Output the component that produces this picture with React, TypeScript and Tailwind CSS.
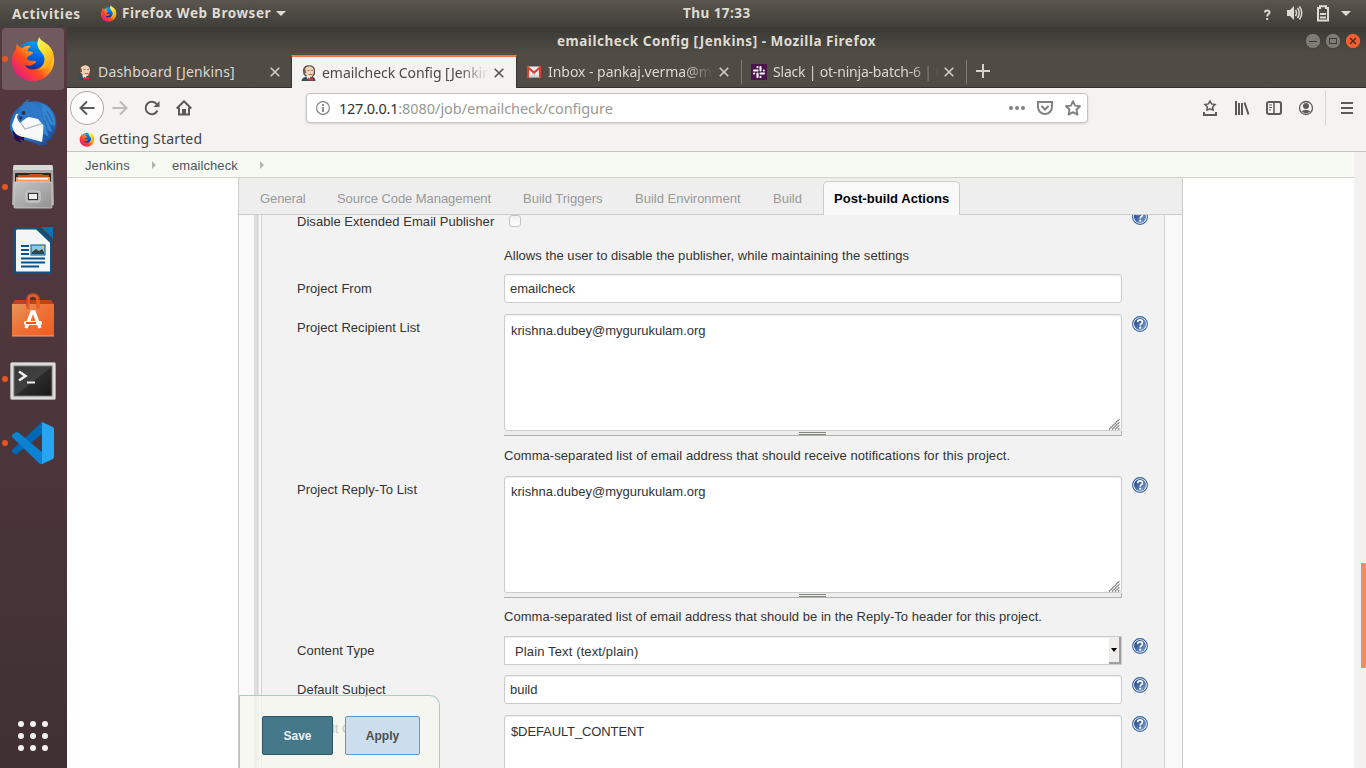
import React from "react";

const UI = "font-['Noto_Sans',sans-serif]";

function FirefoxLogo({ size }: { size: number }) {
  return (
    <svg width={size} height={size} viewBox="0 0 48 48" className="shrink-0">
      <defs>
        <linearGradient id="fxBody" x1="0.95" y1="0.15" x2="0.1" y2="0.9">
          <stop offset="0" stopColor="#fff44f" />
          <stop offset="0.35" stopColor="#ffa01e" />
          <stop offset="0.6" stopColor="#ff4a1f" />
          <stop offset="1" stopColor="#e5148c" />
        </linearGradient>
        <linearGradient id="fxGlobe" x1="0.7" y1="0" x2="0.4" y2="1">
          <stop offset="0" stopColor="#0aa5f5" />
          <stop offset="0.5" stopColor="#0060df" />
          <stop offset="1" stopColor="#20116e" />
        </linearGradient>
        <linearGradient id="fxFlame" x1="0.3" y1="0" x2="0.7" y2="1">
          <stop offset="0" stopColor="#fff85a" />
          <stop offset="0.5" stopColor="#ffd62a" />
          <stop offset="1" stopColor="#ff9410" />
        </linearGradient>
      </defs>
      <circle cx="24" cy="23" r="17.5" fill="url(#fxGlobe)" />
      <path
        d="M7.5 8C6 11 6.500 13.500 6.500 13.500C3 17 2 22 2 26C2 38 12 47 24 47C37 47 46 37 46 25C46 18 43 12 38 8C39 14 40 18 38 24C36 31 30 35 24 35C20 35 17 33 15.500 30C19 32 23 31 25 29C27 28 28 27 26.500 26C22 26 18 26 18 23.500C18 21 22 20 24 18C24 16.500 22 16 18 16C19 13 20 12 22 10.500C18 9.500 15 10.500 13 12.500C10 12 8 10 7.500 8Z"
        fill="url(#fxBody)"
      />
      <path
        d="M31 1C28 5 28 9 30 13C32 17 36 19 36 24C36 29 33 33 30 35C36 35 43 31 45 25C47 17 42 11 38 8C34 5 31 4 31 1Z"
        fill="url(#fxFlame)"
      />
    </svg>
  );
}

function Thunderbird() {
  return (
    <svg width="50" height="50" viewBox="0 0 50 50">
      <defs>
        <linearGradient id="tb" x1="0" y1="0" x2="1" y2="1">
          <stop offset="0" stopColor="#1d5fb4" />
          <stop offset="0.5" stopColor="#2b7fd2" />
          <stop offset="1" stopColor="#173a86" />
        </linearGradient>
      </defs>
      <path d="M2 30C1 18 8 9 20 4C31 1 43 7 47 18C50 26 48 34 43 40L45 41L38 43L39 47L32 47L33 49L27 45L5 38Z" fill="url(#tb)" />
      <path d="M4 33L7 42L13 45L12 41L16 43V36Z" fill="#271152" />
      <path d="M8 16L17 15L37 20L34 44L16 39C9 39 5 34 4 27Z" fill="#f8f8f9" />
      <path d="M9 19L17 31L36 25" fill="none" stroke="#aeb4bc" strokeWidth="1.300" />
      <path d="M11 15C13 6 18 2 22 1L19 4C28 3 34 9 36 18L36 28L30 21L21 19C17 20 15 23 12 25C9 21 8 18 11 15Z" fill="#2f78c8" />
      <path d="M34 6C43 10 48 18 47 28L42 26L44 34L38 31L41 39L35 35L36 21C35 15 34 11 34 6Z" fill="#3387d0" />
      <path d="M39 13L45 24M37 17L43 29M36 22L40 33" stroke="#236db8" strokeWidth="1.400" />
      <circle cx="15.500" cy="15" r="2" fill="#27334a" />
      <path d="M11 18L15 19L12 23Z" fill="#1c3568" />
    </svg>
  );
}

function FilesIcon() {
  return (
    <svg width="44" height="46" viewBox="0 0 44 46">
      <defs>
        <linearGradient id="cab" x1="0" y1="0" x2="1" y2="1">
          <stop offset="0" stopColor="#c4c4c4" />
          <stop offset="1" stopColor="#929292" />
        </linearGradient>
      </defs>
      <path d="M2 2Q2 1 4 1H40Q42 1 42 2L43 41H1Z" fill="#a8a8a8" />
      <path d="M3 1H41L42 6H2Z" fill="#d9d9d9" />
      <rect x="4" y="9" width="36" height="10" rx="1" fill="#2b2421" />
      <path d="M7 11H17L19 10H31L33 11H38V20H6Z" fill="#c9500f" />
      <path d="M5 13H39V20H5Z" fill="#f3a04e" />
      <rect x="7" y="14" width="30" height="1.500" fill="#fff" />
      <rect x="3" y="18" width="38" height="26" rx="1" fill="url(#cab)" stroke="#d2d2d2" strokeWidth="0.800" />
      <rect x="15" y="27" width="14" height="11" rx="2" fill="#adadad" stroke="#d5d5d5" />
      <rect x="17.500" y="29.500" width="9" height="6" fill="#eee" stroke="#333" />
    </svg>
  );
}

function WriterIcon() {
  return (
    <svg width="42" height="50" viewBox="0 0 42 50">
      <path d="M4 1H27L40 14V45Q40 48 37 48H4Q1 48 1 45V4Q1 1 4 1Z" fill="#0a5388" />
      <path d="M5 3.500H24L38 17V45.500H4V4.500Z" fill="#f3f5f6" />
      <path d="M29 1H41V13Z" fill="#0b73b4" />
      <path d="M24 3.500L38 17V23Z" fill="#fff" />
      <path d="M9 20H17M9 24H17M9 28H17M9 32.500H33M9 36.500H33M9 40.500H27" stroke="#09528a" strokeWidth="2" />
      <rect x="19" y="19" width="14" height="10" fill="#84cbed" stroke="#13507d" />
      <path d="M20 28V26L24 23L27 25L30 23L32 26V28Z" fill="#34454a" />
      <circle cx="31" cy="21" r="1.300" fill="#f2c53d" />
    </svg>
  );
}

function SoftwareIcon() {
  return (
    <svg width="44" height="46" viewBox="0 0 44 46">
      <defs>
        <linearGradient id="bag" x1="0" y1="0" x2="1" y2="1">
          <stop offset="0" stopColor="#e79559" />
          <stop offset="0.500" stopColor="#ee7036" />
          <stop offset="1" stopColor="#f05c20" />
        </linearGradient>
      </defs>
      <path d="M1 12L4 8H40L43 12V15H1Z" fill="#bb441b" />
      <rect x="1" y="12" width="42" height="32" fill="url(#bag)" />
      <path d="M1 44H43" stroke="#f8a374" strokeWidth="1" />
      <path d="M17 17V8Q17 3 22 3Q27 3 27 8V17" fill="none" stroke="#e5602f" strokeWidth="3.500" />
      <path d="M16 14V8Q16 2 22 2Q28 2 28 8" fill="none" stroke="#9d3b1b" strokeWidth="0.800" />
      <path d="M15 36L21 20H23L29 36" fill="none" stroke="#fff" strokeWidth="3.500" />
      <rect x="13" y="29" width="18" height="4" rx="1.500" fill="#fff" />
      <rect x="15" y="30" width="10" height="2" fill="#e95420" />
    </svg>
  );
}

function TerminalIcon() {
  return (
    <svg width="46" height="38" viewBox="0 0 46 38" className="mt-[3px]">
      <defs>
        <linearGradient id="term" x1="0" y1="0" x2="1" y2="1">
          <stop offset="0" stopColor="#383838" />
          <stop offset="0.500" stopColor="#404040" />
          <stop offset="0.520" stopColor="#2b2b2b" />
          <stop offset="1" stopColor="#191919" />
        </linearGradient>
      </defs>
      <rect x="0.500" y="0.500" width="45" height="37" rx="1.500" fill="#dcdcdc" stroke="#a4a4a4" />
      <rect x="4" y="4" width="38" height="30" fill="url(#term)" stroke="#777" />
      <path d="M9 9.500L15.500 14L9 18.500" fill="none" stroke="#efefef" strokeWidth="2.600" />
      <path d="M17 20.500H25" stroke="#efefef" strokeWidth="2" />
    </svg>
  );
}

function CodeIcon() {
  return (
    <svg width="44" height="44" viewBox="0 0 44 44">
      <path d="M1 29L31 1V13L6 33Q4 34 1 31Z" fill="#0068b5" />
      <path d="M1 14L5 11Q6 11 8 12L32 32V43H29L1 16Z" fill="#0b83d2" />
      <path d="M31 1L42 6Q43 7 43 9V35Q43 37 42 38L31 43Z" fill="#27a5f0" />
    </svg>
  );
}

function JenkinsIcon() {
  return (
    <svg width="16" height="16" viewBox="0 0 16 16" className="shrink-0">
      <path d="M0.500 16Q0.500 13 4 12L12 12Q14.500 13 14.500 16Z" fill="#33505c" />
      <path d="M2 4.500Q3 0.200 8 0.200Q13.500 0.200 14 5V9L11.500 12.500H6L2.500 9.500Z" fill="#54453c" />
      <path d="M3.500 4Q5 1 8.500 1.200Q13 1.500 13 6.500Q13 9.500 10.800 12H7L3.500 8.500Z" fill="#ecd0b4" />
      <path d="M2.500 4L4.500 4.500L5 8L3 8.500Z" fill="#6b584c" />
      <path d="M6.500 5.500H8.500M10.300 5.500H12M8 9.500H11.500" stroke="#8d6b58" strokeWidth="0.900" />
      <path d="M5 11L7 14.500H9.500L9 11.500Z" fill="#f4efe9" />
      <path d="M7 12.800L9.500 13.700L12 12.800V16L9.500 15L7 16Z" fill="#d3343c" />
    </svg>
  );
}

function GmailIcon() {
  return (
    <svg width="16" height="16" viewBox="0 0 16 16" className="shrink-0">
      <rect x="1" y="2.500" width="14" height="11" rx="1" fill="#ececec" />
      <path d="M3 13L8 8L13 13Z" fill="#d5d5d5" />
      <path d="M2 13.500V3.500L8 8.500L14 3.500V13.500" fill="none" stroke="#d8402f" strokeWidth="2.200" />
    </svg>
  );
}

function SlackIcon() {
  return (
    <svg width="16" height="16" viewBox="0 0 16 16" className="shrink-0">
      <rect width="16" height="16" fill="#4a154b" />
      <g stroke="#fff" strokeWidth="2.100" strokeLinecap="round">
        <path d="M6.500 6.500H3M9.500 3V6.500M9.500 9.500H13M6.500 9.500V13" />
        <path d="M6.500 3.100V3.200M12.900 6.500H12.800M9.500 12.900V12.800M3.100 9.500H3.200" />
      </g>
    </svg>
  );
}

function Close({ color }: { color: string }) {
  return (
    <svg width="10" height="10" viewBox="0 0 10 10" className="shrink-0">
      <path d="M0.700 0.700L9.300 9.300M9.300 0.700L0.700 9.300" stroke={color} strokeWidth="1.600" />
    </svg>
  );
}

type TabProps = { icon: React.ReactNode; title: string; active?: boolean; text: string };

function BrowserTab({ icon, title, active, text }: TabProps) {
  return (
    <div
      className={
        active
          ? "flex h-[33px] w-[226px] items-center border-x border-t-2 border-x-[#35342f] border-t-[#f0764a] bg-[#f4f3f2] pr-[12px] pl-[9px]"
          : "flex h-[32px] w-[225px] items-center border-t border-transparent pr-[12px] pl-[10px]"
      }
    >
      {icon}
      <div
        className={`ml-[5px] h-[22px] flex-1 overflow-hidden text-[14px] leading-[21px] whitespace-nowrap ${active ? "text-[#4a4946]" : "text-[#dbd8d0]"} ${
          title.startsWith("Dash") ? "" : "[mask-image:linear-gradient(to_right,black_82%,transparent_100%)]"
        }`}
      >
        <span className={text}>{title}</span>
      </div>
      <div className="ml-[5px]">
        <Close color={active ? "#55534f" : "#d0cdc5"} />
      </div>
    </div>
  );
}

function Help({ className = "mt-[2px]" }: { className?: string }) {
  return (
    <svg width="16" height="16" viewBox="0 0 16 16" className={`ml-[10px] shrink-0 ${className}`}>
      <defs>
        <linearGradient id="helpBlue" x1="0" y1="0" x2="1" y2="1">
          <stop offset="0.200" stopColor="#2a4f92" />
          <stop offset="1" stopColor="#7fa4d6" />
        </linearGradient>
      </defs>
      <circle cx="8" cy="8" r="7.400" fill="#fff" stroke="#34619f" strokeWidth="1.100" />
      <circle cx="8" cy="8" r="6" fill="url(#helpBlue)" />
      <path d="M5.600 6.200Q5.600 3.900 8.100 3.900Q10.400 3.900 10.400 5.900Q10.400 7.200 9.200 7.800Q8.200 8.300 8.200 9.400" fill="none" stroke="#fff" strokeWidth="1.700" />
      <circle cx="8.200" cy="11.700" r="1.100" fill="#fff" />
    </svg>
  );
}

type RowProps = { label?: string; labelClass?: string; height: string; help?: boolean; helpClass?: string; children: React.ReactNode };

function Row({ label, labelClass = "pt-[7px]", height, help, helpClass, children }: RowProps) {
  return (
    <div className={`flex shrink-0 ${height}`}>
      <div className={`w-[207px] shrink-0 leading-[15px] tracking-[0.040px] ${labelClass}`}>{label}</div>
      <div className="w-[618px] shrink-0">{children}</div>
      {help && <Help className={helpClass} />}
    </div>
  );
}

type AreaProps = { value: string; valueClass?: string; hint?: string; hintClass?: string };

function Area({ value, valueClass = "pt-[8px]", hint, hintClass = "" }: AreaProps) {
  return (
    <div>
      <div className={`relative h-[117px] rounded-[3px] border border-[#ccc] bg-white px-[6px] leading-[15px] shadow-[inset_0_1px_1px_rgba(0,0,0,0.075)] ${valueClass}`}>
        {value}
        <svg width="11" height="11" viewBox="0 0 11 11" className="absolute right-[1px] bottom-[0px]">
          <path d="M0 10.500L10.500 0M3 10.500L10.500 3M6 10.500L10.500 6M9 10.500L10.500 9" stroke="#666" strokeWidth="1.200" strokeDasharray="1.600 0.400" />
        </svg>
      </div>
      <div className="flex h-[5px] justify-center border-r border-b border-[#b0b0b0] bg-[#eee] pt-px">
        <div className="h-[3px] w-[27px] border-y border-[#83887f]" />
      </div>
      {hint && <div className={`leading-[15px] whitespace-nowrap ${hintClass}`}>{hint}</div>}
    </div>
  );
}

function Dot() {
  return <div className="h-[6px] w-[6px] rounded-full bg-[#e95420]" />;
}

function DockItem({ running, active, children }: { running?: boolean; active?: boolean; children: React.ReactNode }) {
  return (
    <div className={`flex h-[62px] w-[62px] items-center rounded-[4px] ${active ? "bg-[#705a5d]" : ""}`}>
      <div className="w-[6px]">{running && <Dot />}</div>
      <div className="flex w-[50px] justify-center">{children}</div>
    </div>
  );
}

function Chevron() {
  return <div className="h-0 w-0 border-y-[4px] border-l-[4px] border-y-transparent border-l-[#b3b5b0]" />;
}

export default function App() {
  const S = { fill: "none", stroke: "#5b5a58", strokeWidth: 2 };
  return (
    <div className={`flex h-[768px] w-[1366px] flex-col overflow-hidden bg-white ${UI}`}>
      <div className="flex h-[27px] shrink-0 items-center bg-gradient-to-b from-[#5a564d] to-[#403f3a] text-[14px] font-bold text-[#dfdbd2]">
        <div className="w-[88px] shrink-0 pl-[12px]"><span className="text-[13.500px] tracking-[0.600px]">Activities</span></div>
        <div className="flex w-[212px] shrink-0 items-center pl-[12px] whitespace-nowrap">
          <FirefoxLogo size={17} />
          <span className="ml-[5px] text-[13.500px] tracking-[0.580px]">Firefox Web Browser</span>
          <div className="ml-[5px] h-0 w-0 shrink-0 border-x-[5px] border-t-[5px] border-x-transparent border-t-[#dfdbd2]" />
        </div>
        <div className="flex-1 pl-[383px] text-[13.500px] tracking-[0.450px] whitespace-nowrap">Thu 17:33</div>
        <div className="flex w-[104px] shrink-0 items-center text-[13px]">
          <svg width="10" height="14" viewBox="0 0 10 14" className="mt-[3px]">
            <path d="M2.800 4.500Q3 2.500 5.200 2.500Q7.500 2.500 7.500 4.500Q7.500 5.700 6 6.500Q5.200 7 5.200 8.500M5.200 10V12" fill="none" stroke="#dfdbd2" strokeWidth="2" />
          </svg>
          <svg width="16" height="16" viewBox="0 0 16 16" className="-mt-px ml-[15px]" fill="none" stroke="#dfdbd2" strokeWidth="1.500">
            <path d="M0 5H3L7 1V15L3 11H0Z" fill="#dfdbd2" stroke="none" />
            <path d="M8.500 5Q10.500 8 8.500 11M10.500 3Q14 8 10.500 13M12.500 1.500Q17 8 12.500 14.500" />
          </svg>
          <svg width="12" height="17" viewBox="0 0 12 17" className="-mt-px ml-[14px]" fill="none" stroke="#dfdbd2" strokeWidth="2">
            <path d="M1 3H3V1.200H9V3H11V15.500H1ZM3 9H9M3 12.500H9" />
          </svg>
          <div className="ml-[12px] h-0 w-0 border-x-[5px] border-t-[5px] border-x-transparent border-t-[#dfdbd2]" />
        </div>
      </div>

      <div className="flex h-[741px]">
        <div className="flex w-[67px] shrink-0 flex-col gap-[2px] bg-gradient-to-b from-[#54393f] via-[#4c363c] to-[#3f3033] pt-[1px] pl-[2px]">
          <DockItem running active><FirefoxLogo size={46} /></DockItem>
          <DockItem><Thunderbird /></DockItem>
          <DockItem running><FilesIcon /></DockItem>
          <DockItem><WriterIcon /></DockItem>
          <DockItem><SoftwareIcon /></DockItem>
          <DockItem running><TerminalIcon /></DockItem>
          <DockItem running><CodeIcon /></DockItem>
          <div className="mt-auto mb-[17px] ml-[16px] grid w-[30px] grid-cols-3 gap-[6px]">
            {Array.from({ length: 9 }, (_, i) => (
              <div key={i} className="h-[6px] w-[6px] rounded-full bg-[#f3f1f0]" />
            ))}
          </div>
        </div>

        <div className="flex w-[1299px] flex-col">
          <div className="flex h-[61px] shrink-0 flex-col border-b border-[#31302c] bg-gradient-to-b from-[#3a3934] via-[#504c45] via-45% to-[#504c45]">
            <div className="flex h-[28px] shrink-0 items-center">
              <div className="flex-1 pl-[490px] text-[13.500px] font-bold whitespace-nowrap text-[#dfdbd2]"><span className="tracking-[0.520px]">emailcheck Config [Jenkins] - Mozilla Firefox</span></div>
              <div className="mr-[5px] flex gap-[4px]">
                {["min", "max", "close"].map((k) => (
                  <svg key={k} width="16" height="16" viewBox="0 0 16 16">
                    <circle cx="8" cy="8" r="7.600" fill={k === "close" ? "#ee5f31" : "#7d7b74"} stroke="#35342f" strokeWidth="0.600" />
                    {k === "min" && <path d="M4 8.500H12" stroke="#3b3a35" />}
                    {k === "max" && <rect x="4.500" y="5.500" width="7" height="5" fill="none" stroke="#3b3a35" />}
                    {k === "close" && <path d="M5 5L11 11M11 5L5 11" stroke="#4a2416" strokeWidth="1.300" />}
                  </svg>
                ))}
              </div>
            </div>
            <div className="flex h-[33px] shrink-0">
              <div className="w-[224px] pr-px"><div className="-mr-px w-[224px] overflow-hidden"><div className="-ml-px pl-px"><BrowserTab icon={<JenkinsIcon />} title="Dashboard [Jenkins]" text="tracking-[0.180px]" /></div></div></div>
              <BrowserTab active icon={<JenkinsIcon />} title="emailcheck Config [Jenkins]" text="tracking-[-0.040px]" />
              <div className="-ml-[1px]"><BrowserTab icon={<GmailIcon />} title="Inbox - pankaj.verma@mygurukulam" text="pl-px tracking-[-0.040px]" /></div>
              <div className="mt-[5px] -mr-px h-[24px] w-px bg-[#817d75]" />
              <BrowserTab icon={<SlackIcon />} title="Slack | ot-ninja-batch-6 | Opstree" text="pl-px tracking-[-0.200px]" />
              <div className="mt-[5px] h-[24px] w-px bg-[#817d75]" />
              <svg width="14" height="14" viewBox="0 0 14 14" className="mt-[9px] ml-[9px]">
                <path d="M7 0V14M0 7H14" stroke="#d6d3cb" strokeWidth="2" />
              </svg>
            </div>
          </div>

          <div className="flex h-[64px] shrink-0 flex-col border-b border-[#c5c4c2] bg-[#f4f3f2]">
            <div className="flex h-[40px] shrink-0 items-center">
              <div className="ml-[3px] flex h-[34px] w-[34px] items-center justify-center rounded-full border border-[#acabaa] bg-[#fcfcfc]">
                <svg width="16" height="16" viewBox="0 0 16 16" {...S}><path d="M15.500 8H1.500M8 1.500L1.500 8L8 14.500" /></svg>
              </div>
              <svg width="16" height="16" viewBox="0 0 16 16" {...S} stroke="#bbbab8" className="ml-[8px]"><path d="M0.500 8H14.500M8 1.500L14.500 8L8 14.500" /></svg>
              <svg width="16" height="16" viewBox="0 0 16 16" {...S} className="ml-[16px]"><path d="M13 4.500A6.200 6.200 0 1 0 13.500 10.500" /><path d="M15.500 1V7H9.500Z" fill="#5b5a58" stroke="none" /></svg>
              <svg width="16" height="16" viewBox="0 0 16 16" {...S} className="ml-[16px]"><path d="M0.700 8.500L8 1.300L15.300 8.500M3 7.500V14.500H13V7.500" /><rect x="6" y="9" width="4" height="6" fill="#5b5a58" stroke="none" /></svg>
              <div className="ml-[114px] flex h-[30px] w-[782px] items-center rounded-[4px] border border-[#c5c4c2] bg-white pr-[6px] pl-[9px] shadow-sm">
                <svg width="14" height="14" viewBox="0 0 14 14" fill="none" stroke="#858482">
                  <circle cx="7" cy="7" r="6.400" strokeWidth="1.200" /><path d="M7 6V11M7 3V5" strokeWidth="1.800" />
                </svg>
                <div className="ml-[9px] flex-1 pt-[2px] text-[14.500px] whitespace-nowrap text-[#9a9996]">
                  <span className="tracking-[-0.240px] text-[#33322f]">127.0.0.1</span><span className="tracking-[-0.050px]">:8080/job/emailcheck/configure</span>
                </div>
                <svg width="16" height="4" viewBox="0 0 16 4" fill="#828180"><circle cx="2" cy="2" r="2" /><circle cx="8" cy="2" r="2" /><circle cx="14" cy="2" r="2" /></svg>
                <svg width="16" height="16" viewBox="0 0 16 16" fill="none" stroke="#828180" strokeWidth="2" className="ml-[12px]"><path d="M1 2H15V7A7 7 0 0 1 1 7ZM4.500 6L8 9.500L11.500 6" /></svg>
                <svg width="16" height="16" viewBox="0 0 16 16" fill="none" stroke="#828180" strokeWidth="1.900" strokeLinejoin="round" className="ml-[12px]"><path d="M8 1.200L10.100 5.600L15 6.200L11.500 9.500L12.400 14.600L8 12.100L3.600 14.600L4.500 9.500L1 6.200L5.900 5.600Z" /></svg>
              </div>
              <div className="ml-auto flex items-center">
                <svg width="16" height="16" viewBox="0 0 16 16" {...S}><path d="M8 1L9.600 3.900L13 4.500L10.600 6.900L11.100 10.100L8 8.700L4.900 10.100L5.400 6.900L3 4.500L6.400 3.900Z" strokeWidth="1.500" /><path d="M2 12V15H14V12" /></svg>
                <svg width="16" height="16" viewBox="0 0 16 16" {...S} className="ml-[16px]"><path d="M2 1V15M5 3V15M8 3V15M10.500 2.500L14.500 14.500" /></svg>
                <svg width="16" height="16" viewBox="0 0 16 16" {...S} className="ml-[16px]"><rect x="1" y="2" width="14" height="12" rx="2" /><path d="M8 2V14" strokeWidth="1.500" /><path d="M3 5H6M3 7.500H6M3 10H5" strokeWidth="1" /></svg>
                <svg width="16" height="16" viewBox="0 0 16 16" {...S} className="ml-[16px]"><circle cx="8" cy="8" r="6.500" strokeWidth="1.300" /><circle cx="8" cy="6" r="3" fill="#5b5a58" stroke="none" /><path d="M3.500 11.300Q8 8 12.500 11.300Q8 15.500 3.500 11.300Z" fill="#5b5a58" stroke="none" /></svg>
                <div className="ml-[11px] h-[34px] w-px bg-[#d5d4d2]" />
                <svg width="12" height="14" viewBox="0 0 12 14" {...S} className="mr-[13px] ml-[15px]"><path d="M0 2H12M0 7H12M0 12H12" /></svg>
              </div>
            </div>
            <div className="flex h-[22px] items-center pl-[12px] text-[14px] text-[#42413e]">
              <FirefoxLogo size={16} /><span className="-mt-[2px] ml-[4px] tracking-[0.170px]">Getting Started</span>
            </div>
          </div>

          <div className="flex h-[616px] font-['Liberation_Sans',Arial,sans-serif] text-[13px] text-[#333]">
            <div className="flex w-[1287px] flex-col bg-white">
              <div className="flex h-[26px] shrink-0 items-center border-b border-[#d3d3d1] bg-[#f6faf2] pl-[18px] text-[#4d545d]">
                <span className="w-[67px] pt-[2px] tracking-[0.100px]">Jenkins</span><Chevron />
                <span className="ml-[16px] w-[88px] pt-[2px] tracking-[0.080px]">emailcheck</span><Chevron />
              </div>
              <div className="relative ml-[171px] flex h-[590px] w-[945px] flex-col border-x border-[#ccc] bg-[#f9f9f9]">
                <div className="flex h-[37px] shrink-0 border-b border-[#ccc] bg-[#eee] pl-[21px] leading-[42px] whitespace-nowrap text-[#999]">
                  <div className="w-[77px] tracking-[-0.100px]">General</div>
                  <div className="w-[186px] tracking-[-0.060px]">Source Code Management</div>
                  <div className="w-[112px]">Build Triggers</div>
                  <div className="w-[138px]">Build Environment</div>
                  <div className="w-[50px]">Build</div>
                  <div className="mt-[3px] h-[34px] w-[137px] rounded-t-[5px] border border-b-0 border-[#ccc] bg-[#f9f9f9] pl-[10px] leading-[34px] font-bold tracking-[0.050px] text-black">Post-build Actions</div>
                </div>
                <div className="ml-[15px] flex h-[553px] w-[911px] overflow-hidden border-r border-[#d3d3d3]">
                  <div className="mr-[2px] w-[5px] shrink-0 bg-[#ddd]" />
                  <div className="flex w-[903px] shrink-0 flex-col border-l border-[#d3d3d3] bg-[#f2f2f2] pl-[35px]">
                    <div className="flex h-[30px] shrink-0">
                      <div className="w-[212px] leading-[14px] tracking-[0.045px] whitespace-nowrap">Disable Extended Email Publisher</div>
                      <div className="h-[12px] w-[12px] rounded-[3px] border border-[#c4c4c4] bg-gradient-to-b from-[#f0f0f0] to-white" />
                      <div className="ml-[601px]"><Help className="-mt-[6px]" /></div>
                    </div>
                    <Row height="h-[29px]"><div className="pt-[3px] leading-[15px] tracking-[0.045px]">Allows the user to disable the publisher, while maintaining the settings</div></Row>
                    <Row label="Project From" height="h-[40px]">
                      <div className="h-[29px] rounded-[3px] border border-[#ccc] bg-white px-[5px] leading-[27px] shadow-[inset_0_1px_1px_rgba(0,0,0,0.075)]">emailcheck</div>
                    </Row>
                    <Row label="Project Recipient List" labelClass="pt-[6px]" height="h-[162px]" help><Area value="krishna.dubey@mygurukulam.org" hint="Comma-separated list of email address that should receive notifications for this project." hintClass="pt-[12px] tracking-[0.068px]" /></Row>
                    <Row label="Project Reply-To List" labelClass="pt-[6px]" height="h-[160px]" help helpClass="mt-[1px]"><Area value="krishna.dubey@mygurukulam.org" valueClass="pt-[7px]" hint="Comma-separated list of email address that should be in the Reply-To header for this project." hintClass="pt-[11px] tracking-[0.035px]" /></Row>
                    <Row label="Content Type" height="h-[39px]" help>
                      <div className="flex h-[29px] border border-[#ccc] bg-white pl-[10px] leading-[29px] shadow-[inset_0_1px_1px_rgba(0,0,0,0.075)]">
                        <div className="flex-1 tracking-[0.130px]">Plain Text (text/plain)</div>
                        <div className="flex h-[27px] w-[12px] items-center justify-center border-r-2 border-b-2 border-[#a0a0a0] bg-[#efeeec]">
                          <div className="h-0 w-0 border-x-[3px] border-t-[4px] border-x-transparent border-t-black" />
                        </div>
                      </div>
                    </Row>
                    <Row label="Default Subject" height="h-[40px]" help>
                      <div className="h-[29px] rounded-[3px] border border-[#ccc] bg-white px-[5px] leading-[27px] shadow-[inset_0_1px_1px_rgba(0,0,0,0.075)]">build</div>
                    </Row>
                    <Row label="Default Content" labelClass="pt-[6px]" height="h-[130px]" help helpClass="mt-[1px]"><Area value="$DEFAULT_CONTENT" valueClass="pt-[8px] tracking-[-0.110px]" /></Row>
                  </div>
                </div>
                <div className="absolute bottom-0 left-0 flex h-[73px] w-[201px] gap-[12px] rounded-tr-[10px] border border-b-0 border-[#a9cdbb] bg-[#f4f7ee]/75 pt-[20px] pl-[22px] text-[12px] font-bold">
                  <div className="flex h-[39px] w-[71px] items-center justify-center rounded-[2px] border border-[#2f5867] bg-[#457889] text-[#eee]">Save</div>
                  <div className="flex h-[39px] w-[75px] items-center justify-center rounded-[2px] border border-[#5f96d0] bg-[#ccdded] text-[#4d4d4d]">Apply</div>
                </div>
              </div>
            </div>
            <div className="flex w-[12px] justify-end bg-[#f2f1f0] pt-[411px]">
              <div className="h-[105px] w-[5px] bg-[#f08d69]" />
            </div>
          </div>
        </div>
      </div>
    </div>
  );
}
